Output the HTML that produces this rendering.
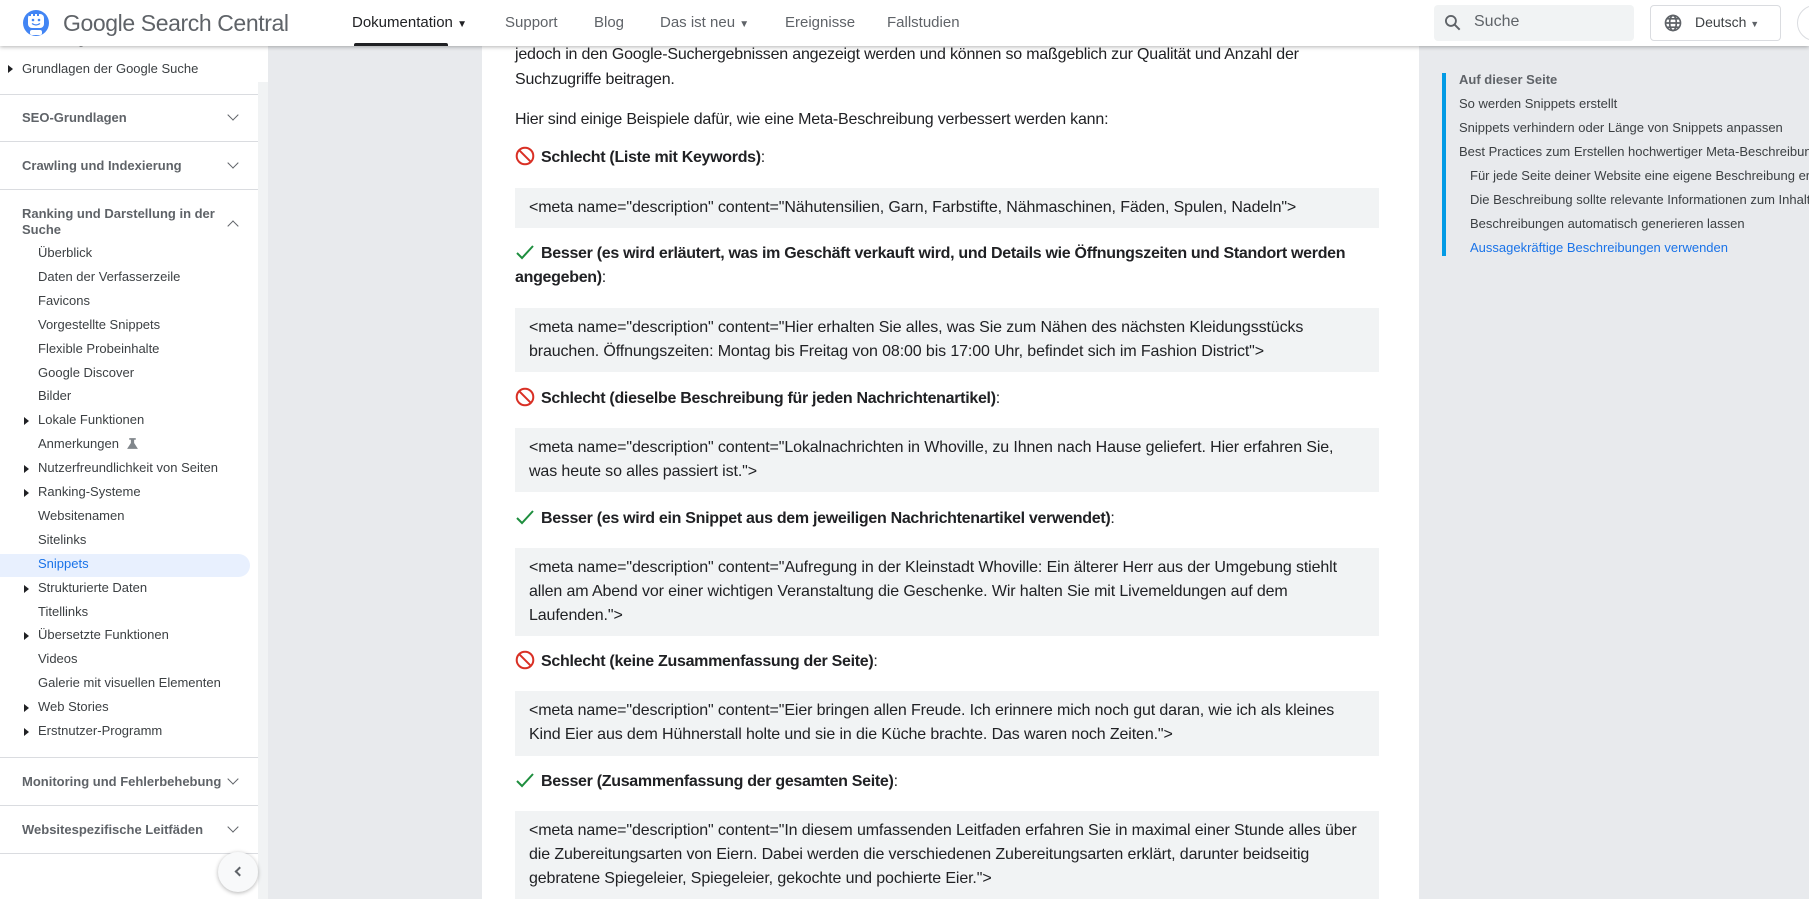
<!DOCTYPE html>
<html><head><meta charset="utf-8">
<style>
*{margin:0;padding:0;box-sizing:border-box}
html,body{width:1809px;height:899px;overflow:hidden}
body{background:#e8eaed;font-family:"Liberation Sans",Arial,sans-serif;position:relative;color:#202124}
.abs{position:absolute}
#hdr{left:0;top:0;width:1809px;height:46px;background:#fff;box-shadow:0 1px 4px rgba(0,0,0,.3);z-index:5;overflow:hidden}
.nav{top:14px;font-size:15px;color:#5f6368;white-space:nowrap}
#side{left:0;top:46px;width:268px;height:853px;background:#fff;overflow:hidden}
.sh{left:22px;font-size:13px;font-weight:bold;color:#5f6368;white-space:nowrap}
.si{left:38px;font-size:13px;color:#3c4043;white-space:nowrap;line-height:16px}
.div{left:0;width:258px;height:1px;background:#dadce0}
.arr{left:24px;width:0;height:0;border-top:4px solid transparent;border-bottom:4px solid transparent;border-left:5px solid #202124}
.chev{left:229px;width:8px;height:8px;border-right:1.8px solid #5f6368;border-bottom:1.8px solid #5f6368;transform:rotate(45deg)}
#main{left:482px;top:46px;width:937px;height:853px;background:#fff}
.p{left:515px;font-size:16px;line-height:24px;color:#202124;white-space:nowrap;letter-spacing:-0.2px}
.h{left:515px;font-size:16px;line-height:24px;font-weight:bold;white-space:nowrap;letter-spacing:-0.3px}
.h span{font-weight:normal}
.h svg{vertical-align:-4px;margin-right:6px}
.code{left:515px;width:864px;background:#f1f3f4;padding:8px 17px 0 14px;font-size:16px;line-height:24px;color:#202124;letter-spacing:-0.12px}
.toc{font-size:13px;color:#3c4043;white-space:nowrap}
#clip{left:0;top:0;width:1809px;height:899px;overflow:hidden}
</style></head><body>
<div id="clip" class="abs">
<div id="hdr" class="abs">
 <svg class="abs" style="left:22px;top:8px" width="28" height="30" viewBox="0 0 28 30"><circle cx="14" cy="15" r="13" fill="#4285f4"/><rect x="6" y="6" width="16" height="14" rx="4" fill="#fff"/><rect x="7" y="4" width="2" height="4" fill="#4285f4"/><rect x="11" y="4" width="2" height="4" fill="#4285f4"/><rect x="15" y="4" width="2" height="4" fill="#4285f4"/><circle cx="11" cy="12" r="1.3" fill="#4285f4"/><circle cx="17" cy="12" r="1.3" fill="#4285f4"/><path d="M10 15.5q4 3 8 0" stroke="#4285f4" stroke-width="1.3" fill="none"/><rect x="8" y="22" width="12" height="5" rx="2" fill="#fff"/></svg>
 <div class="abs" style="left:63px;top:10px;font-size:23px;color:#5f6368;white-space:nowrap;letter-spacing:-0.4px">Google Search Central</div>
 <div class="abs nav" style="left:352px;color:#202124">Dokumentation <span style="font-size:10px">▼</span></div>
 <div class="abs" style="left:354px;top:43px;width:94px;height:3px;background:#202124;border-radius:2px 2px 0 0"></div>
 <div class="abs nav" style="left:505px">Support</div>
 <div class="abs nav" style="left:594px">Blog</div>
 <div class="abs nav" style="left:660px">Das ist neu <span style="font-size:10px">▼</span></div>
 <div class="abs nav" style="left:785px">Ereignisse</div>
 <div class="abs nav" style="left:887px">Fallstudien</div>
 <div class="abs" style="left:1434px;top:5px;width:200px;height:36px;background:#f1f3f4;border-radius:4px"></div>
 <svg class="abs" style="left:1443px;top:13px" width="20" height="20" viewBox="0 0 24 24"><circle cx="9.5" cy="9.5" r="6" stroke="#5f6368" stroke-width="2.2" fill="none"/><path d="M14 14l6 6" stroke="#5f6368" stroke-width="2.4"/></svg>
 <div class="abs" style="left:1474px;top:13px;font-size:16px;color:#5f6368">Suche</div>
 <div class="abs" style="left:1650px;top:5px;width:131px;height:36px;border:1px solid #dadce0;border-radius:4px"></div>
 <svg class="abs" style="left:1663px;top:13px" width="20" height="20" viewBox="0 0 24 24" fill="none" stroke="#5f6368" stroke-width="2"><circle cx="12" cy="12" r="9"/><ellipse cx="12" cy="12" rx="4" ry="9"/><path d="M3 12h18M5 7h14M5 17h14"/></svg>
 <div class="abs" style="left:1695px;top:14px;font-size:14px;color:#3c4043">Deutsch <span style="font-size:9px;color:#5f6368">▼</span></div>
 <div class="abs" style="left:1797px;top:5px;width:36px;height:36px;border:1px solid #dadce0;border-radius:50%"></div>
</div>

<div id="side" class="abs">
 <div class="abs si" style="left:22px;top:-14px">Einführung</div>
 <div class="abs arr" style="top:19px;left:8px"></div>
 <div class="abs si" style="left:22px;top:15px">Grundlagen der Google Suche</div>
 <div class="abs" style="left:258px;top:36px;width:10px;height:817px;background:#f1f3f4"></div>
 <div class="abs div" style="top:48px"></div>
 <div class="abs sh" style="top:64px">SEO-Grundlagen</div><div class="abs chev" style="top:65px"></div>
 <div class="abs div" style="top:95px"></div>
 <div class="abs sh" style="top:112px">Crawling und Indexierung</div><div class="abs chev" style="top:113px"></div>
 <div class="abs div" style="top:143px"></div>
 <div class="abs sh" style="top:160px;line-height:16px">Ranking und Darstellung in der<br>Suche</div><div class="abs chev" style="top:176px;transform:rotate(225deg)"></div>
 <div class="abs" style="left:0;top:508px;width:250px;height:23px;background:#e8f0fe;border-radius:0 12px 12px 0"></div>
 <div id="items"></div>
 <div class="abs div" style="top:711px"></div>
 <div class="abs sh" style="top:728px">Monitoring und Fehlerbehebung</div><div class="abs chev" style="top:729px"></div>
 <div class="abs div" style="top:759px"></div>
 <div class="abs sh" style="top:776px">Websitespezifische Leitfäden</div><div class="abs chev" style="top:777px"></div>
 <div class="abs div" style="top:807px"></div>
 <div class="abs" style="left:218px;top:806px;width:40px;height:40px;border-radius:50%;background:#f8f9fa;box-shadow:0 1px 4px rgba(0,0,0,.3)"></div>
 <div class="abs" style="left:236px;top:822px;width:7px;height:7px;border-left:2px solid #5f6368;border-bottom:2px solid #5f6368;transform:rotate(45deg)"></div>
</div>

<div id="main" class="abs"></div>
<div class="abs p" style="top:43px">jedoch in den Google-Suchergebnissen angezeigt werden und können so maßgeblich zur Qualität und Anzahl der</div>
<div class="abs p" style="top:68px">Suchzugriffe beitragen.</div>
<div class="abs p" style="top:108px">Hier sind einige Beispiele dafür, wie eine Meta-Beschreibung verbessert werden kann:</div>

<div class="abs h" style="top:146px"><svg width="20" height="20" viewBox="0 0 20 20"><circle cx="10" cy="10" r="8.3" stroke="#d93025" stroke-width="2" fill="none"/><path d="M4.2 4.2l11.6 11.6" stroke="#d93025" stroke-width="2"/></svg>Schlecht (Liste mit Keywords)<span>:</span></div>
<div class="abs code" style="top:188px;height:40px">&lt;meta name="description" content="Nähutensilien, Garn, Farbstifte, Nähmaschinen, Fäden, Spulen, Nadeln"&gt;</div>

<div class="abs h" style="top:242px;white-space:normal;width:870px"><svg width="20" height="20" viewBox="0 0 20 20"><path d="M2 11l5 5L18 4" stroke="#1e8e3e" stroke-width="2" fill="none"/></svg>Besser (es wird erläutert, was im Geschäft verkauft wird, und Details wie Öffnungszeiten und Standort werden angegeben)<span>:</span></div>
<div class="abs code" style="top:308px;height:64px">&lt;meta name="description" content="Hier erhalten Sie alles, was Sie zum Nähen des nächsten Kleidungsstücks<br>brauchen. Öffnungszeiten: Montag bis Freitag von 08:00 bis 17:00 Uhr, befindet sich im Fashion District"&gt;</div>

<div class="abs h" style="top:387px"><svg width="20" height="20" viewBox="0 0 20 20"><circle cx="10" cy="10" r="8.3" stroke="#d93025" stroke-width="2" fill="none"/><path d="M4.2 4.2l11.6 11.6" stroke="#d93025" stroke-width="2"/></svg>Schlecht (dieselbe Beschreibung für jeden Nachrichtenartikel)<span>:</span></div>
<div class="abs code" style="top:428px;height:64px">&lt;meta name="description" content="Lokalnachrichten in Whoville, zu Ihnen nach Hause geliefert. Hier erfahren Sie,<br>was heute so alles passiert ist."&gt;</div>

<div class="abs h" style="top:507px"><svg width="20" height="20" viewBox="0 0 20 20"><path d="M2 11l5 5L18 4" stroke="#1e8e3e" stroke-width="2" fill="none"/></svg>Besser (es wird ein Snippet aus dem jeweiligen Nachrichtenartikel verwendet)<span>:</span></div>
<div class="abs code" style="top:548px;height:88px">&lt;meta name="description" content="Aufregung in der Kleinstadt Whoville: Ein älterer Herr aus der Umgebung stiehlt<br>allen am Abend vor einer wichtigen Veranstaltung die Geschenke. Wir halten Sie mit Livemeldungen auf dem<br>Laufenden."&gt;</div>

<div class="abs h" style="top:650px"><svg width="20" height="20" viewBox="0 0 20 20"><circle cx="10" cy="10" r="8.3" stroke="#d93025" stroke-width="2" fill="none"/><path d="M4.2 4.2l11.6 11.6" stroke="#d93025" stroke-width="2"/></svg>Schlecht (keine Zusammenfassung der Seite)<span>:</span></div>
<div class="abs code" style="top:691px;height:65px">&lt;meta name="description" content="Eier bringen allen Freude. Ich erinnere mich noch gut daran, wie ich als kleines<br>Kind Eier aus dem Hühnerstall holte und sie in die Küche brachte. Das waren noch Zeiten."&gt;</div>

<div class="abs h" style="top:770px"><svg width="20" height="20" viewBox="0 0 20 20"><path d="M2 11l5 5L18 4" stroke="#1e8e3e" stroke-width="2" fill="none"/></svg>Besser (Zusammenfassung der gesamten Seite)<span>:</span></div>
<div class="abs code" style="top:811px;height:88px;padding-right:4px">&lt;meta name="description" content="In diesem umfassenden Leitfaden erfahren Sie in maximal einer Stunde alles über<br>die Zubereitungsarten von Eiern. Dabei werden die verschiedenen Zubereitungsarten erklärt, darunter beidseitig<br>gebratene Spiegeleier, Spiegeleier, gekochte und pochierte Eier."&gt;</div>

<div class="abs" style="left:1442px;top:73px;width:4px;height:183px;background:#039be5"></div>
<div class="abs toc" style="left:1459px;top:72px;font-weight:bold;color:#5f6368">Auf dieser Seite</div>
<div class="abs toc" style="left:1459px;top:96px">So werden Snippets erstellt</div>
<div class="abs toc" style="left:1459px;top:120px">Snippets verhindern oder Länge von Snippets anpassen</div>
<div class="abs toc" style="left:1459px;top:144px">Best Practices zum Erstellen hochwertiger Meta-Beschreibungen</div>
<div class="abs toc" style="left:1470px;top:168px">Für jede Seite deiner Website eine eigene Beschreibung erstellen</div>
<div class="abs toc" style="left:1470px;top:192px">Die Beschreibung sollte relevante Informationen zum Inhalt der Seite enthalten</div>
<div class="abs toc" style="left:1470px;top:216px">Beschreibungen automatisch generieren lassen</div>
<div class="abs toc" style="left:1470px;top:240px;color:#1a73e8">Aussagekräftige Beschreibungen verwenden</div>
</div>
<script>
var items=[["Überblick",0],["Daten der Verfasserzeile",0],["Favicons",0],["Vorgestellte Snippets",0],["Flexible Probeinhalte",0],["Google Discover",0],["Bilder",0],["Lokale Funktionen",1],["Anmerkungen",2],["Nutzerfreundlichkeit von Seiten",1],["Ranking-Systeme",1],["Websitenamen",0],["Sitelinks",0],["Snippets",3],["Strukturierte Daten",1],["Titellinks",0],["Übersetzte Funktionen",1],["Videos",0],["Galerie mit visuellen Elementen",0],["Web Stories",1],["Erstnutzer-Programm",1]];
var h="";
for(var i=0;i<items.length;i++){var t=199+i*23.9;var it=items[i];
h+='<div class="abs si" style="top:'+t.toFixed(1)+'px'+(it[1]==3?';color:#1a73e8':'')+'">'+it[0]+(it[1]==2?' <svg width="13" height="13" viewBox="0 0 12 12" style="vertical-align:-2px;margin-left:3px"><path d="M3 1h6v1.5H7.5v3L11 11H1l3.5-5.5v-3H3z" fill="#80868b"/></svg>':'')+'</div>';
if(it[1]==1)h+='<div class="abs arr" style="top:'+(t+5).toFixed(1)+'px"></div>';}
document.getElementById("items").outerHTML=h;
</script>
</body></html>
